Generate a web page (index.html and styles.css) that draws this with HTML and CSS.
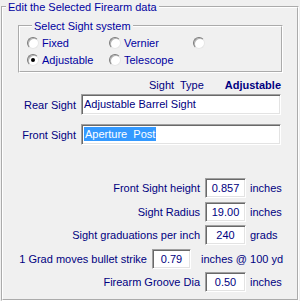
FILE: index.html
```html
<!DOCTYPE html>
<html lang="en">
<head>
    <meta charset="UTF-8">
    <title>Firearm Sight Data</title>
    <link rel="stylesheet" href="styles.css">
</head>
<body>
    <fieldset class="panel">
        <legend class="panel-title">Edit the Selected Firearm data</legend>

        <!-- sight system choice -->
        <fieldset class="system">
            <legend class="system-title">Select Sight system</legend>
            <div class="radio-grid">
                <div class="opt"><span class="radio"></span>Fixed</div>
                <div class="opt"><span class="radio"></span>Vernier</div>
                <div class="opt"><span class="radio"></span></div>
                <div class="opt"><span class="radio checked"></span>Adjustable</div>
                <div class="opt"><span class="radio"></span>Telescope</div>
            </div>
        </fieldset>

        <div class="type-row">
            <span class="type-label">Sight  Type</span>
            <span class="type-value">Adjustable</span>
        </div>

        <div class="sight-row">
            <span class="sight-label">Rear Sight</span>
            <div class="text-box wide">Adjustable Barrel Sight</div>
        </div>
        <div class="sight-row front">
            <span class="sight-label">Front Sight</span>
            <div class="text-box wide"><span class="selected">Aperture  Post</span></div>
        </div>

        <!-- numeric values -->
        <div class="values">
            <div class="value-row">
                <span class="value-label">Front Sight height</span>
                <div class="text-box num">0.857</div>
                <span class="unit">inches</span>
            </div>
            <div class="value-row">
                <span class="value-label">Sight Radius</span>
                <div class="text-box num">19.00</div>
                <span class="unit">inches</span>
            </div>
            <div class="value-row">
                <span class="value-label">Sight graduations per inch</span>
                <div class="text-box num">240</div>
                <span class="unit">grads</span>
            </div>
            <div class="value-row strike">
                <span class="value-label">1 Grad moves bullet strike</span>
                <div class="text-box num">0.79</div>
                <span class="unit">inches @ 100 yd</span>
            </div>
            <div class="value-row">
                <span class="value-label">Firearm Groove Dia</span>
                <div class="text-box num">0.50</div>
                <span class="unit">inches</span>
            </div>
        </div>
    </fieldset>
</body>
</html>
```

FILE: styles.css
```css
* {
    box-sizing: border-box;
}

body {
    margin: 0;
    width: 300px;
    height: 301px;
    overflow: hidden;
    background: #f0f0f0;
    font-family: "Liberation Sans", Arial, sans-serif;
    font-size: 11px;
    color: #000080;
}

/* etched group boxes */
.panel {
    margin: 0 0 0 1px;
    width: 298px;
    height: 301px;
    min-width: 0;
    padding: 0;
    border: 2px groove #fff;
}

.panel-title {
    margin-left: 3px;
    padding: 0 2px;
    line-height: 14px;
    color: #0000a0;
}

.system {
    margin: 5px 0 0 15px;
    width: 265px;
    min-width: 0;
    padding: 1px 0 3px 7px;
    border: 2px groove #fff;
}

.system-title {
    margin-left: 5px;
    padding: 0 2px;
    line-height: 14px;
    color: #0000a0;
}

.radio-grid {
    display: grid;
    grid-template-columns: 82px 84px auto;
    grid-auto-rows: 17px;
}

.opt {
    display: flex;
    align-items: center;
    gap: 3px;
    color: #0000a0;
}

.radio {
    position: relative;
    width: 12px;
    height: 12px;
    border-radius: 50%;
    border: 1px solid;
    border-color: #7a7a7a #e6e6e6 #e6e6e6 #7a7a7a;
    background: #fff;
    box-shadow: inset 1px 1px 0 #b4b4b4;
}

.radio.checked::after {
    content: "";
    position: absolute;
    left: 3px;
    top: 3px;
    width: 4px;
    height: 4px;
    border-radius: 50%;
    background: #000;
}

/* sight type line */
.type-row {
    display: flex;
    margin: 5px 16px 0 146px;
    line-height: 14px;
}

.type-label {
    white-space: pre;
}

.type-value {
    margin-left: auto;
    font-weight: bold;
}

.sight-row {
    display: flex;
    align-items: center;
    gap: 5px;
    margin-top: 2px;
}

.sight-row.front {
    margin-top: 9px;
}

.sight-label {
    width: 73px;
    text-align: right;
}

.text-box {
    height: 21px;
    border: 1px solid;
    border-color: #a0a0a0 #fff #fff #a0a0a0;
    box-shadow: inset 1px 1px 0 #696969, inset -1px -1px 0 #e3e3e3;
    background: #fff;
    line-height: 19px;
    white-space: pre;
}

.text-box.wide {
    width: 200px;
    padding-left: 2px;
}

.selected {
    background: #3399ff;
    color: #fff;
    padding: 1px 1px;
}

.values {
    display: flex;
    flex-direction: column;
    gap: 3.5px;
    margin-top: 33px;
}

.value-row {
    display: flex;
    align-items: center;
}

.value-label {
    width: 197px;
    text-align: right;
}

.text-box.num {
    width: 41px;
    height: 20px;
    margin: 0 4px 0 5px;
    text-align: center;
    line-height: 18px;
}

.strike .value-label {
    width: 144px;
}

.strike .text-box.num {
    width: 39px;
    margin-right: 10px;
}
```
